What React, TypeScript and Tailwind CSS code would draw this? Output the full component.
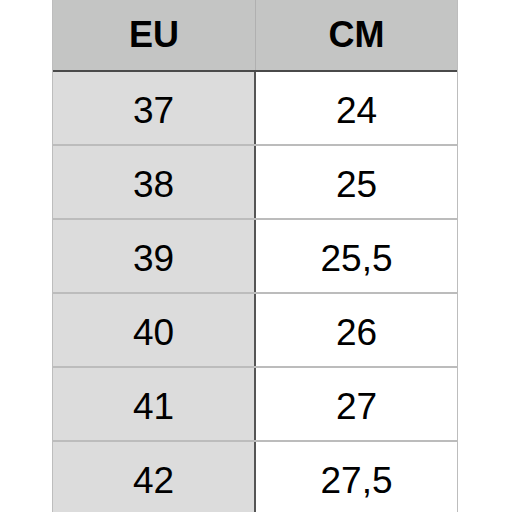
const rows = [
  { eu: '37', cm: '24' },
  { eu: '38', cm: '25' },
  { eu: '39', cm: '25,5' },
  { eu: '40', cm: '26' },
  { eu: '41', cm: '27' },
  { eu: '42', cm: '27,5' },
];

export default function App() {
  return (
    <div className="w-[512px] h-[512px] overflow-hidden bg-white" style={{ fontFamily: '"Liberation Sans", Arial, sans-serif' }}>
      <div className="ml-[52px] w-[406px] border-x border-[#bdbdbd]">
        <div className="grid grid-cols-[203px_1fr] h-[72px] bg-[#c4c5c4] border-b-2 border-[#4a4a4a]">
          <div className="flex items-center justify-center border-r border-[#b0b0b0] text-[36px] font-bold text-black">
            EU
          </div>
          <div className="flex items-center justify-center text-[36px] font-bold text-black">
            CM
          </div>
        </div>
        {rows.map((row) => (
          <div key={row.eu} className="grid grid-cols-[203px_1fr] h-[74px] border-b-2 border-[#bcbcbc]">
            <div className="flex items-center justify-center pt-[5px] bg-[#dcdcdc] border-r-2 border-[#555555] text-[37px] text-black">
              {row.eu}
            </div>
            <div className="flex items-center justify-center pt-[5px] bg-white text-[37px] text-black">
              {row.cm}
            </div>
          </div>
        ))}
      </div>
    </div>
  );
}
